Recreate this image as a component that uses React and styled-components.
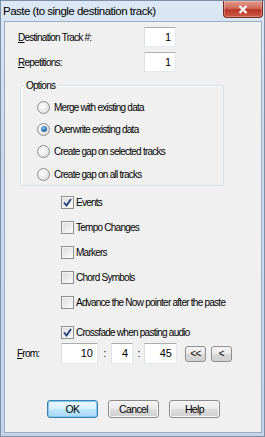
import React, { useState } from "react"
import styled, { createGlobalStyle, css } from "styled-components"

const GlobalStyle = createGlobalStyle`
  html, body {
    margin: 0;
    padding: 0;
    background: #fff;
  }
  body {
    font-family: "Liberation Sans", Arial, sans-serif;
    font-size: 10px;
    letter-spacing: -0.75px;
    color: #000;
  }
`

const Window = styled.div`
  box-sizing: border-box;
  width: 265px;
  height: 437px;
  display: flex;
  flex-direction: column;
  border: 1px solid #7f90a6;
  background: linear-gradient(180deg, #dbe7f4 0%, #cadbee 30%, #c3d6ec 100%);
`

const TitleBar = styled.div`
  height: 20px;
  display: flex;
  align-items: flex-start;
  flex-shrink: 0;
`

const Title = styled.div`
  padding-left: 2px;
  line-height: 21px;
  font-size: 11.5px;
  letter-spacing: -0.5px;
  color: #000;
  white-space: nowrap;
`

const CloseButton = styled.div`
  margin-left: auto;
  margin-right: 1px;
  width: 40px;
  height: 17px;
  box-sizing: border-box;
  border: 1px solid #7a2b24;
  border-top: none;
  border-radius: 0 0 4px 4px;
  background: linear-gradient(180deg, #e49a8d 0%, #d06a5a 45%, #b93726 55%, #cc5a45 100%);
  box-shadow: inset 0 0 0 1px rgba(255, 255, 255, 0.25);
  display: flex;
  align-items: center;
  justify-content: center;
`

const Client = styled.div`
  flex: 1;
  margin: 0 2px 3px 3px;
  border: 1px solid #9badc2;
  background: #f0f0f0;
`

const FieldRow = styled.div`
  display: flex;
  align-items: center;
  height: 20px;
  padding-left: 13px;
  margin-top: ${(p) => p.$top}px;
`

const Label = styled.span`
  width: ${(p) => p.$w}px;
  flex-shrink: 0;
  white-space: nowrap;
`

const TextBox = styled.div`
  box-sizing: border-box;
  width: ${(p) => p.$w}px;
  height: ${(p) => p.$h || 20}px;
  background: #fff;
  border: 1px solid #e2e8ee;
  border-top-color: #abadb3;
  border-left-color: #dbdfe6;
  text-align: right;
  padding-right: 4px;
  line-height: ${(p) => (p.$h || 20) - 2}px;
  font-size: 11px;
  letter-spacing: 0;
`

const Group = styled.div`
  box-sizing: border-box;
  margin: 13px 0 0 15px;
  width: 204px;
  height: 101px;
  border: 1px solid #d5dfe5;
  border-radius: 3px;
  box-shadow: inset 1px 1px 0 #fff;
`

const GroupLabel = styled.div`
  width: max-content;
  margin: -7px 0 0 3px;
  padding: 0 2px;
  line-height: 13px;
  background: #f0f0f0;
`

const RadioList = styled.div`
  padding-top: 4px;
`

const OptionRow = styled.label`
  display: flex;
  align-items: center;
  height: ${(p) => p.$h}px;
  padding-left: ${(p) => p.$indent}px;
  margin-top: ${(p) => p.$top || 0}px;
  white-space: nowrap;
  cursor: default;
`

const RadioCircle = styled.span`
  box-sizing: border-box;
  width: 13px;
  height: 13px;
  border-radius: 50%;
  border: 1px solid #8e8f8f;
  background: radial-gradient(circle at 40% 40%, #ffffff 0%, #e8e8e8 55%, #cdcdcd 100%);
  margin-right: 4px;
  display: flex;
  align-items: center;
  justify-content: center;
  flex-shrink: 0;
  ${(p) =>
    p.$on &&
    css`
      &::after {
        content: "";
        width: 6px;
        height: 6px;
        border-radius: 50%;
        background: radial-gradient(circle at 40% 35%, #8ec5f0 0%, #2b6ea8 55%, #173f6b 100%);
      }
    `}
`

const CheckList = styled.div`
  margin: 6px 0 0 56px;
`

const CheckBox = styled.span`
  box-sizing: border-box;
  width: 13px;
  height: 13px;
  border: 1px solid #8e8f8f;
  background: linear-gradient(135deg, #dadada 0%, #eeeeee 60%, #ffffff 100%);
  box-shadow: inset 0 0 0 1px #f4f4f4;
  margin-right: 2px;
  display: flex;
  align-items: center;
  justify-content: center;
  flex-shrink: 0;
`

const FromRow = styled.div`
  display: flex;
  align-items: center;
  height: 21px;
  margin: 1px 0 0 12px;
`

const Colon = styled.span`
  width: ${(p) => p.$w}px;
  text-align: center;
  flex-shrink: 0;
`

const NavButton = styled.button`
  box-sizing: border-box;
  width: 21px;
  height: 16px;
  margin-left: ${(p) => p.$gap}px;
  padding: 0;
  border: 1px solid #8f8f8f;
  border-radius: 3px;
  background: linear-gradient(180deg, #f4f4f4 0%, #e8e8e8 50%, #d9d9d9 51%, #d0d0d0 100%);
  font-family: inherit;
  font-size: 10px;
  letter-spacing: -0.5px;
  line-height: 14px;
  color: #000;
`

const ButtonRow = styled.div`
  display: flex;
  gap: 10px;
  margin: 36px 0 0 42px;
`

const PushButton = styled.button`
  box-sizing: border-box;
  width: 51px;
  height: 18px;
  padding: 0;
  border: 1px solid ${(p) => (p.$default ? "#3c7fb1" : "#8a8a8a")};
  border-radius: 3px;
  background: ${(p) =>
    p.$default
      ? "linear-gradient(180deg, #eaf6fd 0%, #d9f0fc 50%, #bee6fd 51%, #a7d9f5 100%)"
      : "linear-gradient(180deg, #f2f2f2 0%, #ebebeb 50%, #dddddd 51%, #cfcfcf 100%)"};
  box-shadow: inset 0 0 0 1px ${(p) => (p.$default ? "#7ec7ee" : "#f8f8f8")};
  font-family: inherit;
  font-size: 10.5px;
  letter-spacing: -0.6px;
  color: #000;
`

const Key = styled.span`
  text-decoration: underline;
`

const CheckMark = () => (
  <svg width="9" height="9" viewBox="0 0 9 9">
    <path d="M1 4.5 L3.5 7.5 L8 1" fill="none" stroke="#1f3f78" strokeWidth="1.8" />
  </svg>
)

const radioOptions = [
  "Merge with existing data",
  "Overwrite existing data",
  "Create gap on selected tracks",
  "Create gap on all tracks",
]

const checkOptions = [
  { label: "Events", on: true, top: 0 },
  { label: "Tempo Changes", on: false, top: 5 },
  { label: "Markers", on: false, top: 5 },
  { label: "Chord Symbols", on: false, top: 5 },
  { label: "Advance the Now pointer after the paste", on: false, top: 5 },
  { label: "Crossfade when pasting audio", on: true, top: 10 },
]

export default function App() {
  const [mode, setMode] = useState(1)
  const [checks, setChecks] = useState(checkOptions.map((c) => c.on))

  const toggle = (i) => setChecks(checks.map((v, j) => (j === i ? !v : v)))

  return (
    <Window>
      <GlobalStyle />
      <TitleBar>
        <Title>Paste (to single destination track)</Title>
        <CloseButton>
          <svg width="10" height="9" viewBox="0 0 10 9">
            <path d="M1.5 1 L8.5 8 M8.5 1 L1.5 8" stroke="#fff" strokeWidth="2.2" />
          </svg>
        </CloseButton>
      </TitleBar>
      <Client>
        <FieldRow $top={5}>
          <Label $w={126}>
            <Key>D</Key>estination Track #:
          </Label>
          <TextBox $w={32}>1</TextBox>
        </FieldRow>
        <FieldRow $top={5}>
          <Label $w={126}>
            <Key>R</Key>epetitions:
          </Label>
          <TextBox $w={32}>1</TextBox>
        </FieldRow>

        <Group>
          <GroupLabel>Options</GroupLabel>
          <RadioList>
            {radioOptions.map((label, i) => (
              <OptionRow key={label} $h={22.3} $indent={16} onClick={() => setMode(i)}>
                <RadioCircle $on={mode === i} />
                {label}
              </OptionRow>
            ))}
          </RadioList>
        </Group>

        <CheckList>
          {checkOptions.map((c, i) => (
            <OptionRow key={c.label} $h={20} $indent={0} $top={c.top} onClick={() => toggle(i)}>
              <CheckBox>{checks[i] && <CheckMark />}</CheckBox>
              {c.label}
            </OptionRow>
          ))}
        </CheckList>

        <FromRow>
          <Label $w={44}>
            <Key>F</Key>rom:
          </Label>
          <TextBox $w={37} $h={21}>10</TextBox>
          <Colon $w={13}>:</Colon>
          <TextBox $w={22} $h={21}>4</TextBox>
          <Colon $w={11}>:</Colon>
          <TextBox $w={33} $h={21}>45</TextBox>
          <NavButton $gap={8}>&lt;&lt;</NavButton>
          <NavButton $gap={5}>&lt;</NavButton>
        </FromRow>

        <ButtonRow>
          <PushButton $default>OK</PushButton>
          <PushButton>Cancel</PushButton>
          <PushButton>Help</PushButton>
        </ButtonRow>
      </Client>
    </Window>
  )
}
